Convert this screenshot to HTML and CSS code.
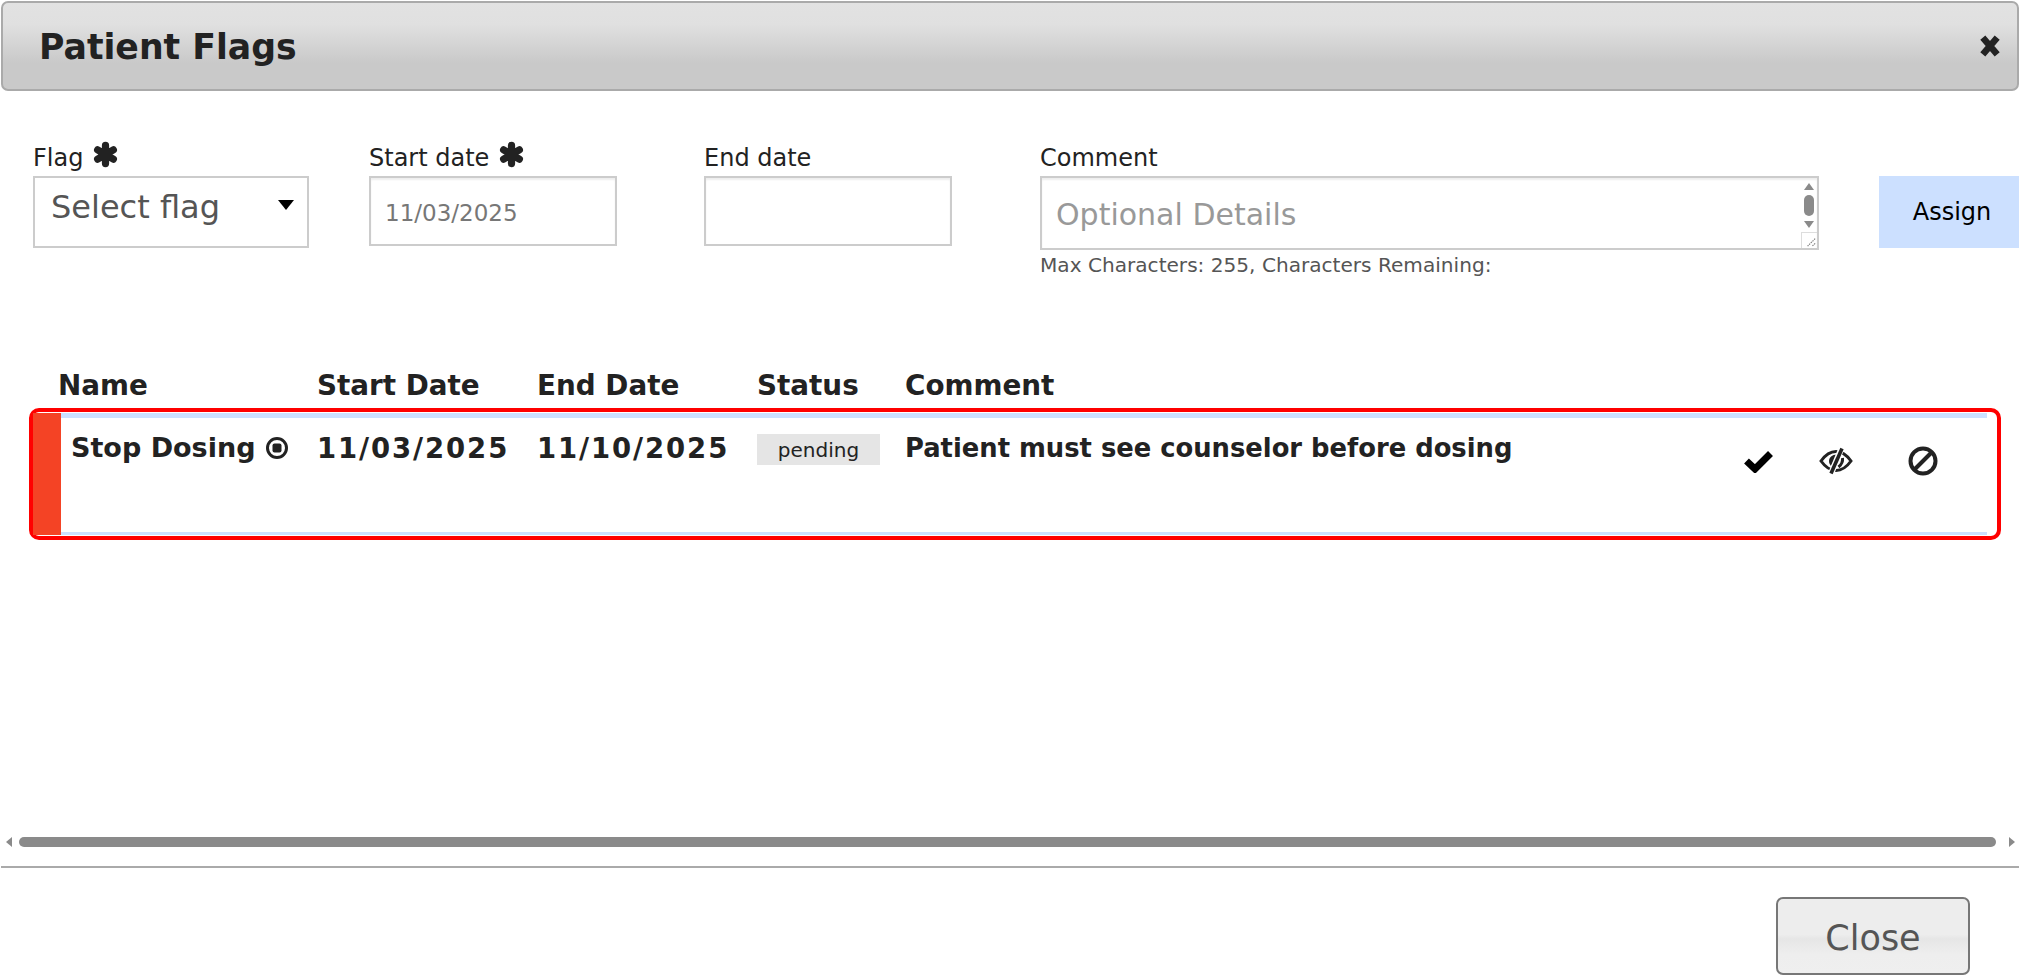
FILE: index.html
```html
<!DOCTYPE html>
<html>
<head>
	<title>Patient Flags</title>
	<link rel="stylesheet" href="styles.css">
</head>
<body>
	<div class="dialog">
		<div class="dialog-head">
			<h1>Patient Flags</h1>
			<svg class="close-x" viewBox="0 0 20 20"><path d="M4 3L16 17M16 3L4 17"/></svg>
		</div>

		<div class="flag-form">
			<div class="field field-flag">
				<label>Flag <svg class="req" viewBox="0 0 24 24"><path d="M12 4.5V19.5M5.5 8.2L18.5 15.8M18.5 8.2L5.5 15.8"/></svg></label>
				<div class="select-box">Select flag<span class="caret"></span></div>
			</div>
			<div class="field field-date field-start">
				<label>Start date <svg class="req" viewBox="0 0 24 24"><path d="M12 4.5V19.5M5.5 8.2L18.5 15.8M18.5 8.2L5.5 15.8"/></svg></label>
				<input class="date-box" type="text" value="11/03/2025">
			</div>
			<div class="field field-date field-end">
				<label>End date</label>
				<input class="date-box" type="text">
			</div>
			<div class="field field-comment">
				<label>Comment</label>
				<div class="comment-box">
					<span class="placeholder">Optional Details</span>
					<div class="fake-scroll">
						<span class="arrow-up"></span>
						<span class="scroll-thumb"></span>
						<span class="arrow-down"></span>
						<svg class="grip" viewBox="0 0 16 16"><path d="M14 6L6 14M14 11L11 14"/></svg>
					</div>
				</div>
				<div class="char-count">Max Characters: 255, Characters Remaining:</div>
			</div>
			<button class="assign-btn">Assign</button>
		</div>

		<div class="flag-table">
			<div class="table-head">
				<span class="col-name">Name</span>
				<span class="col-start">Start Date</span>
				<span class="col-end">End Date</span>
				<span class="col-status">Status</span>
				<span class="col-comment">Comment</span>
			</div>
			<div class="flag-row">
				<div class="row-bar"></div>
				<div class="row-body">
					<span class="col-name">Stop Dosing <svg class="stop-icon" viewBox="0 0 24 24"><circle cx="12" cy="12" r="9.5"/><rect x="7.5" y="7.5" width="9" height="9" rx="2"/></svg></span>
					<span class="col-start row-date">11/03/2025</span>
					<span class="col-end row-date">11/10/2025</span>
					<span class="col-status"><span class="pill">pending</span></span>
					<span class="col-comment">Patient must see counselor before dosing</span>
					<div class="row-actions">
						<svg class="act act-check" viewBox="0 0 30 24"><path d="M3 12L11.5 20L27 4.5"/></svg>
						<svg class="act act-eye" viewBox="0 0 34 28">
							<path class="eye-line" d="M2 14C7 7 12 4.5 17 4.5C22 4.5 27 7 32 14C27 21 22 23.5 17 23.5C12 23.5 7 21 2 14Z"/>
							<path class="eye-fill" d="M18 7.5C13 7.5 10 10.5 10 14C10 16 10.8 17.5 12 19L18 8Z"/>
							<path class="eye-gap" d="M23 0L11.5 28"/>
							<path class="eye-slash" d="M23 1.5L12 26.5"/>
							<path class="eye-line" d="M23.5 11C24 15 22 18 19.5 20"/>
						</svg>
						<svg class="act act-ban" viewBox="0 0 30 30"><circle cx="15" cy="15" r="12.5"/><path d="M7 23L23 7"/></svg>
					</div>
				</div>
			</div>
		</div>

		<div class="h-scroll">
			<span class="arrow-left"></span>
			<span class="h-thumb"></span>
			<span class="arrow-right"></span>
		</div>

		<div class="dialog-foot">
			<button class="close-btn">Close</button>
		</div>
	</div>
</body>
</html>
```

FILE: styles.css
```css
*{
	margin: 0;
	padding: 0;
	box-sizing: border-box;
}
html,body{
	height: 100%;
	background: #fff;
}
body{
	font-family: "DejaVu Sans", Verdana, sans-serif;
	color: #222;
	overflow: hidden;
}
.dialog{
	width: 2022px;
	height: 976px;
	padding-top: 1px;
	display: flex;
	flex-direction: column;
}

/* header */
.dialog-head{
	margin: 0 3px 0 1px;
	height: 90px;
	padding: 0 15px 0 36px;
	border: 2px solid #aaa;
	border-radius: 7px;
	background: linear-gradient(#e2e2e2 0, #e0e0e0 25%, #c9c9c9 70%, #c9c9c9 100%);
	display: flex;
	align-items: center;
	justify-content: space-between;
}
.dialog-head h1{
	font-size: 34.7px;
	font-weight: bold;
	margin-top: 1px;
}
.close-x{
	width: 24px;
	height: 24px;
	fill: none;
	stroke: #222;
	stroke-width: 5.5;
	margin-top: 0;
}

/* form */
.flag-form{
	display: flex;
	margin-top: 49px;
	height: 226px;
	padding-left: 33px;
}
.field label{
	display: block;
	font-size: 24px;
	line-height: 36px;
	height: 36px;
	white-space: nowrap;
}
.req{
	width: 29px;
	height: 29px;
	fill: none;
	stroke: #222;
	stroke-width: 6;
	stroke-linecap: round;
	vertical-align: -3px;
}
.field-flag{
	width: 276px;
	margin-right: 60px;
}
.field-date{
	width: 248px;
}
.field-start{
	margin-right: 87px;
}
.field-end{
	margin-right: 88px;
}
.field-comment{
	width: 779px;
	margin-right: 60px;
}
.select-box{
	position: relative;
	height: 72px;
	border: 2px solid #ccc;
	padding: 7px 0 0 16px;
	font-size: 32px;
	line-height: 44px;
	color: #555;
}
.caret{
	position: absolute;
	right: 13px;
	top: 22px;
	border-left: 8px solid transparent;
	border-right: 8px solid transparent;
	border-top: 10px solid #000;
}
.date-box{
	display: block;
	width: 100%;
	height: 70px;
	border: 2px solid #ccc;
	box-shadow: inset 0 2px 2px #eee;
	padding: 4px 14px 0;
	font-family: "DejaVu Sans", Verdana, sans-serif;
	font-size: 23px;
	color: #777;
	outline: none;
}
.comment-box{
	height: 74px;
	border: 2px solid #ccc;
	box-shadow: inset 0 2px 2px #eee;
	display: flex;
	justify-content: space-between;
}
.placeholder{
	font-size: 30px;
	line-height: 74px;
	padding-left: 14px;
	color: #999;
}
.fake-scroll{
	width: 16px;
	display: flex;
	flex-direction: column;
	align-items: center;
	padding-top: 5px;
	position: relative;
}
.arrow-up{
	border-left: 5px solid transparent;
	border-right: 5px solid transparent;
	border-bottom: 7px solid #8a8a8a;
}
.scroll-thumb{
	width: 10px;
	height: 21px;
	margin: 5px 0 5px;
	border-radius: 5px;
	background: #8a8a8a;
}
.arrow-down{
	border-left: 5px solid transparent;
	border-right: 5px solid transparent;
	border-top: 7px solid #8a8a8a;
}
.grip{
	position: absolute;
	right: 0;
	bottom: 0;
	width: 16px;
	height: 16px;
	border: 1px solid #ddd;
	border-width: 1px 0 0 1px;
	fill: none;
	stroke: #777;
	stroke-width: 1.2;
	stroke-dasharray: 1.5 1;
}
.char-count{
	font-size: 20.1px;
	line-height: 22px;
	margin-top: 4px;
	color: #555;
	white-space: nowrap;
}
.assign-btn{
	width: 140px;
	height: 72px;
	margin-top: 36px;
	padding-left: 6px;
	border: 0;
	background: #cce0ff;
	color: #000;
	font-family: "DejaVu Sans", Verdana, sans-serif;
	font-size: 24px;
}

/* table */
.flag-table{
	margin: 0 21px 0 29px;
	flex: 1;
	font-weight: bold;
	font-size: 27.8px;
}
.table-head{
	display: flex;
	height: 42px;
	line-height: 40px;
	padding-left: 29px;
}
.table-head .col-name{
	width: 259px;
}
.col-start,
.col-end{
	width: 220px;
	white-space: nowrap;
}
.col-status{
	width: 148px;
}
.flag-row{
	height: 132px;
	display: flex;
	border: 4px solid #f00;
	border-radius: 10px;
	padding: 1px 0 1px;
	font-size: 25.8px;
}
.row-bar{
	width: 28px;
	background: #f44325;
	flex: none;
}
.row-body{
	flex: 1;
	display: flex;
	border-top: 5px solid #cce0ff;
	border-bottom: 3px solid #cce0ff;
	margin-right: 10px;
	padding: 11px 0 0 10px;
	line-height: 38px;
}
.row-body .col-name{
	width: 246px;
	white-space: nowrap;
	font-size: 27px;
}
.row-date{
	font-size: 27.5px;
	letter-spacing: 1.9px;
}
.stop-icon{
	width: 24px;
	height: 24px;
	vertical-align: -3px;
	fill: #222;
}
.stop-icon circle{
	fill: none;
	stroke: #222;
	stroke-width: 3;
}
.pill{
	display: block;
	width: 123px;
	height: 31px;
	margin-top: 5px;
	background: #e5e5e5;
	font-size: 20px;
	font-weight: normal;
	line-height: 33px;
	text-align: center;
}
.row-body .col-comment{
	flex: 1;
	white-space: nowrap;
}
.row-actions{
	width: 244px;
	display: flex;
	align-items: flex-start;
	padding-top: 20px;
	flex: none;
}
.act{
	fill: none;
	display: block;
}
.act-check{
	width: 31px;
	height: 24px;
	stroke: #000;
	stroke-width: 7;
	margin-right: 45px;
}
.act-eye{
	width: 34px;
	height: 28px;
	margin-right: 55px;
	stroke: #222;
	margin-top: -2px;
}
.eye-line{
	stroke-width: 3;
}
.eye-fill{
	fill: #222;
	stroke: none;
}
.eye-gap{
	stroke: #fff;
	stroke-width: 6;
}
.eye-slash{
	stroke-width: 3.6;
}
.act-ban{
	width: 30px;
	height: 30px;
	stroke: #222;
	stroke-width: 4;
	margin-top: -3px;
}

/* bottom scrollbar */
.h-scroll{
	height: 10px;
	padding: 0 6px;
	display: flex;
	align-items: center;
	gap: 7px;
}
.arrow-left{
	border-top: 5px solid transparent;
	border-bottom: 5px solid transparent;
	border-right: 6px solid #8a8a8a;
}
.h-thumb{
	flex: 1;
	height: 10px;
	border-radius: 5px;
	background: #8a8a8a;
}
.arrow-right{
	border-top: 5px solid transparent;
	border-bottom: 5px solid transparent;
	border-left: 6px solid #8a8a8a;
	margin-left: 6px;
	margin-right: 1px;
}

/* footer */
.dialog-foot{
	height: 110px;
	margin: 19px 3px 0 1px;
	border-top: 2px solid #aaa;
	padding: 29px 49px 0 0;
	display: flex;
	justify-content: flex-end;
}
.close-btn{
	width: 194px;
	height: 78px;
	padding-top: 3px;
	border: 2px solid #777;
	border-radius: 7px;
	background: linear-gradient(#ededed 0, #ededed 48%, #e6e6e6 54%, #eeeeee 75%, #efefef 100%);
	color: #555;
	font-family: "DejaVu Sans", Verdana, sans-serif;
	font-size: 35px;
}
```
